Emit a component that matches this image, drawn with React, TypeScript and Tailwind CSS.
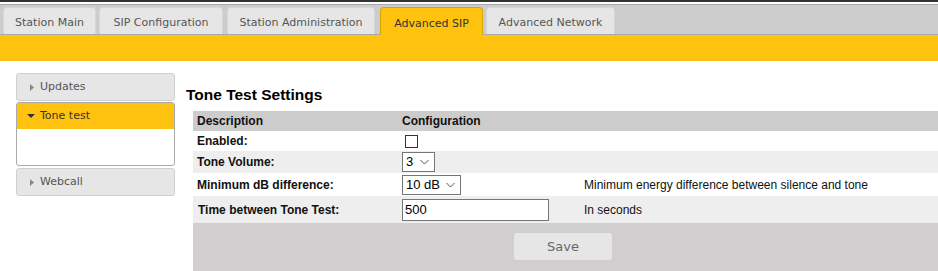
import React from 'react';

const tabs = [
  { label: 'Station Main', w: 'w-[93px]', ml: 'ml-0' },
  { label: 'SIP Configuration', w: 'w-[124px]', ml: 'ml-[3px]' },
  { label: 'Station Administration', w: 'w-[148px]', ml: 'ml-[4px]' },
  { label: 'Advanced SIP', w: 'w-[103px]', ml: 'ml-[5px]' },
  { label: 'Advanced Network', w: 'w-[129px]', ml: 'ml-[3px]' },
];

function Chevron() {
  return (
    <svg width="9" height="6" viewBox="0 0 9 6" className="ml-auto">
      <path d="M0.5 1 L4.5 5 L8.5 1" fill="none" stroke="#555" strokeWidth="1" />
    </svg>
  );
}

function Select({ value, width }: { value: string; width: string }) {
  return (
    <div className={`flex items-center ${width} h-[20px] border border-[#767676] bg-white pl-[3px] pr-[5px] text-[13px] text-black`}>
      <span>{value}</span>
      <Chevron />
    </div>
  );
}

function SideItem({ label }: { label: string }) {
  return (
    <div className="flex items-center h-[28px] bg-[#e6e6e6] border border-[#d0d0d0] rounded-[3px] pl-[13px] text-[11px] text-[#555]">
      <svg width="4" height="7" viewBox="0 0 4 7" className="mr-[6px]">
        <path d="M0 0 L4 3.5 L0 7 Z" fill="#888" />
      </svg>
      {label}
    </div>
  );
}

export default function App() {
  return (
    <div className="w-[938px] h-[271px] bg-white overflow-hidden" style={{ fontFamily: '"DejaVu Sans", Verdana, sans-serif' }}>
      <div className="h-[2px] bg-[#333]" />
      <div className="h-[2px] bg-white" />
      <div className="flex items-end h-[31px] px-[3px] bg-[#ccc] border-t border-b border-[#aaa]">
        {tabs.map((t) => {
          const active = t.label === 'Advanced SIP';
          return (
            <div
              key={t.label}
              className={
                (active
                  ? 'h-[28px] -mb-px bg-[#ffc20e] border-[#d8a400] text-[#333] '
                  : 'h-[27px] bg-[#e6e6e6] border-[#d6d6d6] text-[#555] ') +
                `${t.w} ${t.ml} flex items-center justify-center pt-[5px] border border-b-0 rounded-t-[4px] text-[11px]`
              }
            >
              {t.label}
            </div>
          );
        })}
      </div>
      <div className="h-[26px] bg-[#ffc20e]" />

      <div className="flex">
        <div className="ml-[16px] w-[159px] mt-[12px] flex flex-col gap-[1px]">
          <SideItem label="Updates" />
          <div className="h-[64px] border border-[#aaa] rounded-[3px] overflow-hidden bg-white">
            <div className="flex items-center h-[26px] bg-[#ffc20e] pl-[10px] text-[11px] text-[#333]">
              <svg width="8" height="4" viewBox="0 0 8 4" className="mr-[5px]">
                <path d="M0 0 L8 0 L4 4 Z" fill="#333" />
              </svg>
              Tone test
            </div>
          </div>
          <div className="mt-[1px]">
            <SideItem label="Webcall" />
          </div>
        </div>

        <div className="flex-1 ml-[11px] pt-[25px]" style={{ fontFamily: '"Liberation Sans", Arial, sans-serif' }}>
          <h2 className="text-[15.5px] leading-[18px] font-bold text-black mb-[7px]">Tone Test Settings</h2>
          <table className="ml-[7px] w-[745px] border-collapse text-[12px] text-[#111]">
            <tbody>
              <tr className="h-[20px] bg-[#ccc] font-bold">
                <td className="w-[205px] pl-[4px]">Description</td>
                <td className="w-[182px] pl-[4px]">Configuration</td>
                <td />
              </tr>
              <tr className="h-[20px] bg-white font-bold">
                <td className="pl-[4px]">Enabled:</td>
                <td className="pl-[7px]">
                  <div className="w-[13px] h-[13px] border border-[#333] bg-white" />
                </td>
                <td />
              </tr>
              <tr className="h-[22px] bg-[#eee]">
                <td className="pl-[4px] font-bold">Tone Volume:</td>
                <td className="pl-[4px]">
                  <Select value="3" width="w-[33px]" />
                </td>
                <td />
              </tr>
              <tr className="h-[23px] bg-white">
                <td className="pl-[4px] font-bold">Minimum dB difference:</td>
                <td className="pl-[4px]">
                  <Select value="10 dB" width="w-[59px]" />
                </td>
                <td className="pl-[4px]">Minimum energy difference between silence and tone</td>
              </tr>
              <tr className="h-[27px] bg-[#eee]">
                <td className="pl-[5px] font-bold">Time between Tone Test:</td>
                <td className="pl-[4px]">
                  <div className="w-[147px] h-[22px] border border-[#767676] bg-white pl-[2px] text-[13px] leading-[20px] text-black">500</div>
                </td>
                <td className="pl-[4px]">In seconds</td>
              </tr>
              <tr className="h-[48px] bg-[#d0cece]">
                <td colSpan={3} className="align-top pt-[10px] pr-[5px]">
                  <div className="mx-auto flex items-center justify-center w-[98px] h-[27px] bg-[#e6e6e6] rounded-[3px] text-[13px] text-[#666]" style={{ fontFamily: '"DejaVu Sans", Verdana, sans-serif' }}>
                    Save
                  </div>
                </td>
              </tr>
            </tbody>
          </table>
        </div>
      </div>
    </div>
  );
}
